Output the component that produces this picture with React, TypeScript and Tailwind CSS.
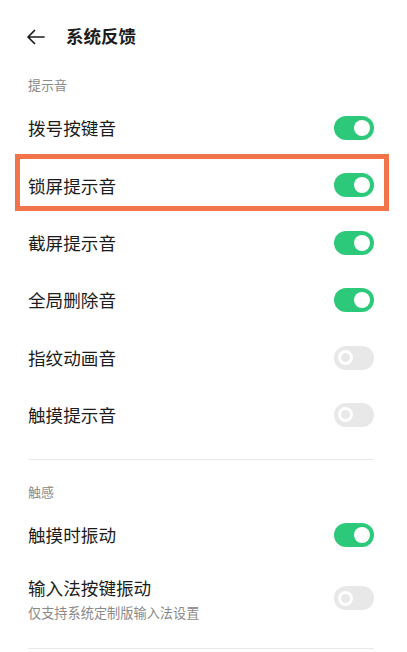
import React from "react";

function Toggle({ on }: { on: boolean }) {
  if (on) {
    return (
      <div className="w-[40px] h-[24px] rounded-full bg-[#2dc97a] flex items-center justify-end pr-[4px] shrink-0">
        <div className="w-[16px] h-[16px] rounded-full bg-white" />
      </div>
    );
  }
  return (
    <div className="w-[40px] h-[24px] rounded-full bg-[#e8e8e8] flex items-center pl-[4px] shrink-0">
      <div className="w-[15px] h-[15px] rounded-full border-[3px] border-white bg-[#e8e8e8]" />
    </div>
  );
}

function Row({ label, on }: { label: string; on: boolean }) {
  return (
    <div className="h-[57.4px] flex items-center justify-between">
      <span className="text-[17.6px] leading-none text-[#1c1c1c]">{label}</span>
      <Toggle on={on} />
    </div>
  );
}

export default function App() {
  const rows1: [string, boolean][] = [
    ["拨号按键音", true],
    ["锁屏提示音", true],
    ["截屏提示音", true],
    ["全局删除音", true],
    ["指纹动画音", false],
    ["触摸提示音", false],
  ];
  return (
    <div
      className="relative w-[407px] h-[652px] bg-white overflow-hidden"
      style={{ fontFamily: '"Noto Sans CJK SC", "Noto Sans", sans-serif' }}
    >
      <div className="h-[36px] mt-[18px] flex items-center pl-[26px]">
        <svg width="19" height="16" viewBox="0 0 19 16" fill="none" className="mt-[1px]">
          <path d="M18 8H2M8.5 1.5L2 8l6.5 6.5" stroke="#1c1c1c" strokeWidth="1.7" strokeLinecap="round" strokeLinejoin="round" />
        </svg>
        <span className="ml-[21px] text-[17.5px] font-semibold leading-none text-[#1c1c1c]">系统反馈</span>
      </div>

      <div className="px-[28px] pr-[33px]">
        <div className="h-[20px] mt-[21px] flex items-center text-[13px] text-[#8a8a8a]">提示音</div>
        <div className="mt-[4.3px]">
          {rows1.map(([l, o]) => (
            <Row key={l} label={l} on={o} />
          ))}
        </div>
        <div className="mt-[15px] h-px bg-[#e9e9e9]" />
        <div className="h-[20px] mt-[22px] flex items-center text-[13px] text-[#8a8a8a]">触感</div>
        <div className="mt-[4.3px]">
          <Row label="触摸时振动" on={true} />
        </div>
        <div className="h-[70px] flex items-center justify-between">
          <div className="flex flex-col mt-[3px]">
            <span className="text-[17.6px] leading-none text-[#1c1c1c] mt-[-2px]">输入法按键振动</span>
            <span className="text-[13.2px] leading-none text-[#8a8a8a] mt-[9px]">仅支持系统定制版输入法设置</span>
          </div>
          <Toggle on={false} />
        </div>
        <div className="mt-[15px] h-px bg-[#e9e9e9]" />
      </div>

      <div className="absolute left-[15px] top-[154px] w-[374px] h-[57px] border-[5px] border-[#f1744a] pointer-events-none" />
    </div>
  );
}
